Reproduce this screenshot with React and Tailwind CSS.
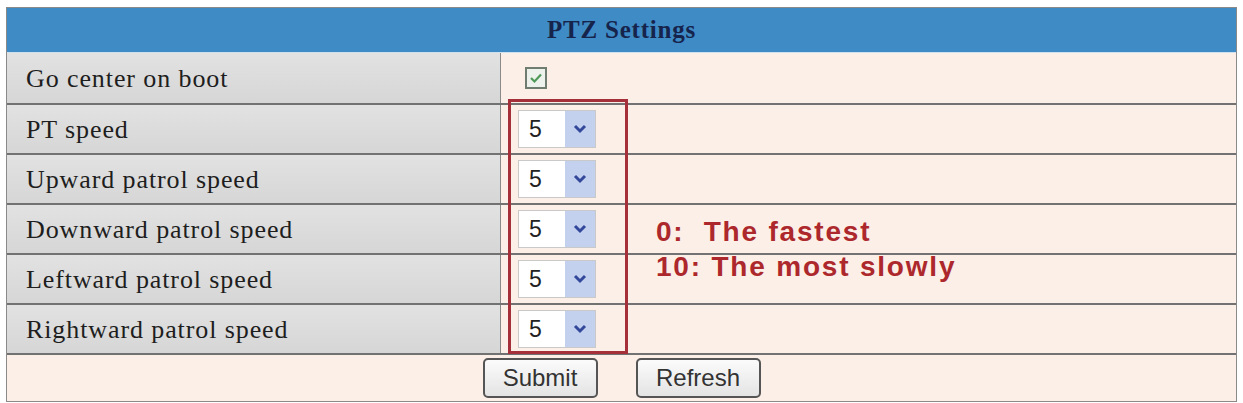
import React from "react";

const rows = [
  "PT speed",
  "Upward patrol speed",
  "Downward patrol speed",
  "Leftward patrol speed",
  "Rightward patrol speed",
];

const SpeedSelect = ({ value }) => (
  <div className="flex h-[38px] w-[78px] border border-[#c9c9c9] bg-white">
    <div className="flex flex-1 items-center pl-[10px] font-['Liberation_Sans',Arial,sans-serif] text-[23px] text-[#222]">
      {value}
    </div>
    <div className="flex w-[30px] items-center justify-center bg-[#c3d1ee]">
      <svg width="14" height="10" viewBox="0 0 14 10">
        <path d="M2 2 L7 7 L12 2" fill="none" stroke="#33489a" strokeWidth="3" />
      </svg>
    </div>
  </div>
);

const Row = ({ label, children, first }) => (
  <div className={`flex h-[50px] ${first ? "" : "border-t-2 border-[#727272]"}`}>
    <div className="flex w-[494px] items-center border-r border-[#8a8a8a] bg-gradient-to-b from-[#e2e2e2] to-[#d6d6d6] pl-[19px] font-['Liberation_Serif','Times_New_Roman',serif] text-[26px] tracking-[0.9px] text-[#1e1e1e]">
      {label}
    </div>
    <div className="flex flex-1 items-center bg-[#fbefe7] pl-[17px]">{children}</div>
  </div>
);

const Button = ({ children, width }) => (
  <button
    className={`${width} h-[40px] rounded-[5px] border-2 border-[#555] bg-gradient-to-b from-[#fbfbfb] to-[#e4e4e4] font-['Liberation_Sans',Arial,sans-serif] text-[24px] text-[#333]`}
  >
    {children}
  </button>
);

export default function App() {
  return (
    <div className="relative h-[403px] w-[1243px] bg-white pl-[6px] pt-[7px]">
      <div className="w-[1231px] border border-[#8a8a8a]">
        <div className="flex h-[45px] items-center justify-center border-b border-[#cfe0ee] bg-[#3e8bc6] font-['Liberation_Serif','Times_New_Roman',serif] text-[25px] font-bold tracking-[0.8px] text-[#16244c]">
          PTZ Settings
        </div>
        <Row label="Go center on boot" first>
          <div className="ml-[7px] flex h-[22px] w-[22px] items-center justify-center border-2 border-[#6f7d70] bg-[#eef2ec]">
            <svg width="14" height="12" viewBox="0 0 14 12">
              <path d="M2 6 L5.5 9.5 L12 2.5" fill="none" stroke="#4f9a58" strokeWidth="2.2" />
            </svg>
          </div>
        </Row>
        {rows.map((label) => (
          <Row key={label} label={label}>
            <SpeedSelect value="5" />
          </Row>
        ))}
        <div className="flex h-[48px] items-center justify-center gap-[38px] border-t-2 border-[#727272] bg-[#fbefe7]">
          <Button width="w-[115px]">Submit</Button>
          <Button width="w-[125px]">Refresh</Button>
        </div>
      </div>

      {/* annotation drawn over the table */}
      <div className="pointer-events-none absolute left-[508px] top-[99px] h-[255px] w-[120px] border-[3px] border-[#a5303a]" />
      <div className="pointer-events-none absolute left-[656px] top-[214px] font-['Liberation_Sans',Arial,sans-serif] text-[28px] font-bold leading-[35px] tracking-[1.8px] text-[#ad282c]">
        <div className="whitespace-pre">0:  The fastest</div>
        <div>10: The most slowly</div>
      </div>
    </div>
  );
}
